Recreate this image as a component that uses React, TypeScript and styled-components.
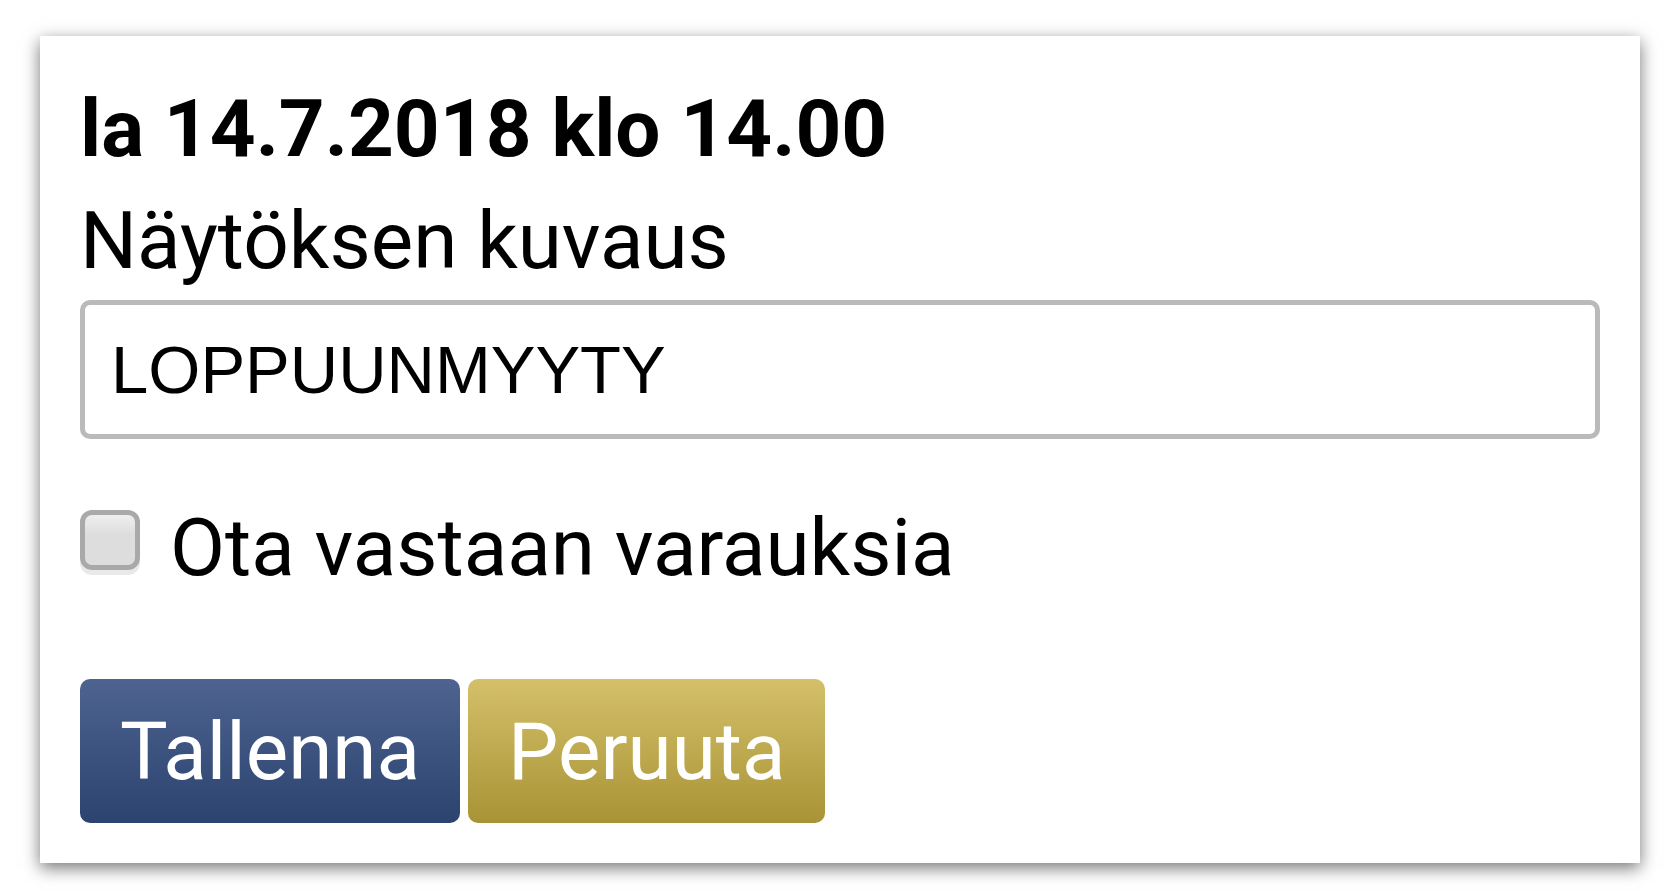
import React, { useState } from "react";
import styled, { createGlobalStyle } from "styled-components";

const GlobalStyle = createGlobalStyle`
  *, *::before, *::after { box-sizing: border-box; }
  body {
    margin: 0;
    background: #fff;
    color: #000;
    font-family: Roboto, "Liberation Sans", sans-serif;
    font-size: 80px;
    line-height: 112px;
  }
`;

const Card = styled.form`
  margin: 36px 37px 33px 40px;
  padding: 37px 40px 40px;
  background: #fff;
  box-shadow: 0 5px 16px rgba(0, 0, 0, 0.54);
`;

const Title = styled.h1`
  margin: 0;
  font-size: 80px;
  line-height: 112px;
  font-weight: 700;
`;

const FieldLabel = styled.label`
  display: block;
`;

const TextField = styled.input`
  display: block;
  width: 100%;
  height: 139px;
  margin: 3px 0 53px;
  padding: 0 26px;
  border: 5px solid #bababa;
  border-radius: 10px;
  background: #fff;
  color: #000;
  font-family: "Liberation Sans", Arial, sans-serif;
  font-size: 67px;
  outline: none;
`;

const CheckRow = styled.label`
  display: flex;
  align-items: center;
  gap: 30px;
  width: max-content;
`;

const Checkbox = styled.input`
  appearance: none;
  flex: none;
  width: 60px;
  height: 60px;
  margin: 0 0 16px;
  border: 5px solid #a9a9a9;
  border-radius: 12px;
  background: linear-gradient(#eee, #ddd 40%, #ddd);
  box-shadow: 0 5px 0 #e9e9e9;
  &:checked { background: #2f4675; }
`;

const Actions = styled.div`
  display: flex;
  gap: 8px;
  margin-top: 75px;
`;

const Button = styled.button<{ $from: string; $to: string }>`
  height: 144px;
  padding: 2px 40px 0;
  border: 0;
  border-radius: 10px;
  background: linear-gradient(${(p) => p.$from}, ${(p) => p.$to});
  color: #fff;
  font: inherit;
  cursor: pointer;
`;

export default function App() {
  const [description, setDescription] = useState("LOPPUUNMYYTY");
  return (
    <>
      <GlobalStyle />
      <Card onSubmit={(e) => e.preventDefault()}>
        <Title>la 14.7.2018 klo 14.00</Title>
        <FieldLabel htmlFor="description">Näytöksen kuvaus</FieldLabel>
        <TextField
          id="description"
          type="text"
          value={description}
          onChange={(e) => setDescription(e.target.value)}
        />
        <CheckRow>
          <Checkbox type="checkbox" />
          Ota vastaan varauksia
        </CheckRow>
        <Actions>
          <Button type="submit" $from="#4e638f" $to="#2c436f">Tallenna</Button>
          <Button type="button" $from="#d4c069" $to="#a89336">Peruuta</Button>
        </Actions>
      </Card>
    </>
  );
}
